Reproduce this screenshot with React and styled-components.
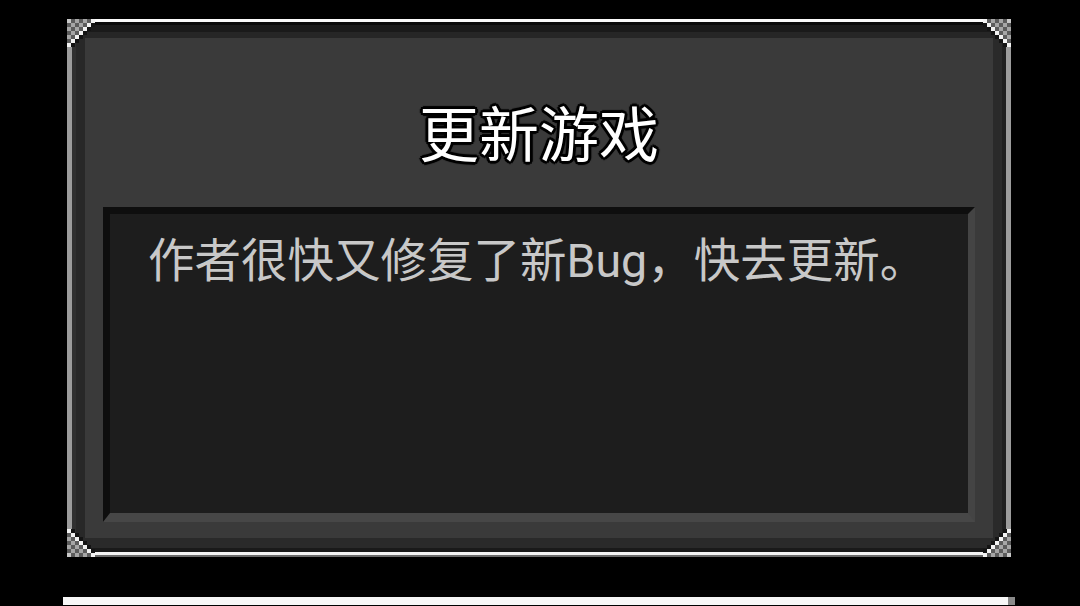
import React from "react";
import styled, { createGlobalStyle } from "styled-components";

const Global = createGlobalStyle`
  html, body { margin: 0; padding: 0; background: #000; }
  body { overflow: hidden; font-family: "Noto Sans CJK SC", "Noto Sans", sans-serif; }
`;

const Page = styled.div`
  width: 1080px;
  height: 606px;
  box-sizing: border-box;
  padding: 19px 0 0 67px;
  background: #000;
  overflow: hidden;
  display: flex;
  flex-direction: column;
`;

const Frame = styled.div`
  position: relative;
  width: 944px;
  height: 536px;
`;

const Panel = styled.div`
  box-sizing: border-box;
  width: 100%;
  height: 100%;
  border-top: 3px solid #fafafa;
  border-bottom: 3px solid #f4f4f4;
  border-left: 5px solid #9c9c9c;
  border-right: 5px solid #9c9c9c;
  background: #3a3a3a;
  box-shadow:
    0 2px 0 #6a6a6a,
    inset 0 3px 0 #0b0b0b,
    inset 0 10px 0 #1a1a1a,
    inset 0 16px 0 #262626,
    inset 0 -4px 0 #1a1a1a,
    inset 0 -14px 0 #2a2a2a,
    inset 4px 0 0 #303030,
    inset 13px 0 0 #282828,
    inset -4px 0 0 #1f1f1f,
    inset -13px 0 0 #2a2a2a;
  display: flex;
  flex-direction: column;
  padding: 0 31px 30px 31px;
`;

const Header = styled.div`
  height: 185px;
  flex: none;
  display: flex;
  align-items: center;
  justify-content: center;
  padding-top: 32px;
  box-sizing: border-box;
`;

const Title = styled.h1`
  margin: 0;
  font-family: "Noto Sans CJK SC", "Noto Sans", sans-serif;
  font-size: 60px;
  font-weight: 400;
  line-height: 1;
  color: #fff;
  text-shadow:
    2px 0 0 #000, -2px 0 0 #000, 0 2px 0 #000, 0 -2px 0 #000,
    2px 2px 0 #000, -2px -2px 0 #000, 2px -2px 0 #000, -2px 2px 0 #000,
    3px 0 1px #000, -3px 0 1px #000, 0 3px 1px #000, 0 -3px 1px #000;
`;

const Content = styled.div`
  flex: 1;
  box-sizing: border-box;
  background: #1d1d1d;
  border-top: 7px solid #0e0e0e;
  border-left: 7px solid #0e0e0e;
  border-right: 7px solid #444;
  border-bottom: 9px solid #474747;
  padding: 17px 20px 0 38px;
`;

const Message = styled.p`
  margin: 0;
  font-family: "Roboto", "Noto Sans CJK SC", sans-serif;
  font-size: 46.5px;
  line-height: 1.3;
  color: #c8c8c8;
  white-space: nowrap;
`;

const CornerSvg = styled.svg`
  position: absolute;
  width: 30px;
  height: 30px;
  ${(p) => (p.$v === "top" ? "top: 0;" : "bottom: -2px;")}
  ${(p) => (p.$h === "left" ? "left: 0;" : "right: 0;")}
  transform: ${(p) =>
    `scale(${p.$h === "left" ? 1 : -1}, ${p.$v === "top" ? 1 : -1})`};
  shape-rendering: crispEdges;
`;

const NextPanel = styled.div`
  margin-top: 42px;
  margin-left: -4px;
  width: 945px;
  height: 8px;
  flex: none;
  background: #f7f7f7;
  border-right: 7px solid #8a8a8a;
`;

function Corner({ v, h }) {
  const cells = [];
  const n = 7;
  const s = 4;
  for (let i = 0; i < n; i++) {
    for (let j = 0; j < n; j++) {
      const d = i + j;
      let fill = null;
      if (d === 0) fill = "#c8c8c8";
      else if (d < 6) fill = d % 2 ? "#5c5c5c" : "#a6a6a6";
      else if (d === 6) fill = "#f2f2f2";
      else if (d === 7) fill = "#141414";
      if (fill)
        cells.push(
          <rect key={`${i}-${j}`} x={i * s} y={j * s} width={s} height={s} fill={fill} />
        );
    }
  }
  return (
    <CornerSvg $v={v} $h={h} viewBox="0 0 30 30">
      {cells}
    </CornerSvg>
  );
}

export default function App() {
  return (
    <>
      <Global />
      <Page>
        <Frame>
          <Panel>
            <Header>
              <Title>更新游戏</Title>
            </Header>
            <Content>
              <Message>作者很快又修复了新Bug，快去更新。</Message>
            </Content>
          </Panel>
          <Corner v="top" h="left" />
          <Corner v="top" h="right" />
          <Corner v="bottom" h="left" />
          <Corner v="bottom" h="right" />
        </Frame>
        <NextPanel />
      </Page>
    </>
  );
}
